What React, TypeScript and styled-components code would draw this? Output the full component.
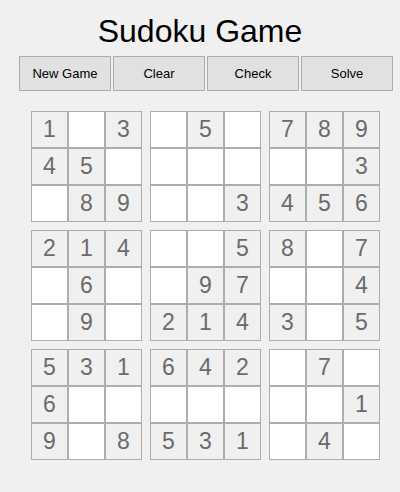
import styled, { createGlobalStyle } from "styled-components";

const GlobalStyle = createGlobalStyle`
  html, body {
    margin: 0;
    padding: 0;
    background: #f0f0f0;
  }
  * {
    box-sizing: border-box;
  }
`;

const Page = styled.div`
  width: 400px;
  min-height: 492px;
  background: #f0f0f0;
  font-family: "Liberation Sans", Arial, sans-serif;
  padding-top: 13px;
`;

const Title = styled.h1`
  margin: 0;
  font-size: 32px;
  font-weight: normal;
  line-height: 37px;
  text-align: center;
  color: #000;
`;

const Toolbar = styled.div`
  display: flex;
  gap: 2px;
  margin: 6px 0 0 19px;
`;

const Button = styled.button`
  width: 92px;
  height: 35px;
  padding: 0;
  background: #e1e1e1;
  border: 1px solid #adadad;
  border-radius: 0;
  font-family: "Liberation Sans", Arial, sans-serif;
  font-size: 13px;
  color: #000;
`;

const Board = styled.div`
  display: grid;
  grid-template-columns: repeat(3, 111px);
  grid-auto-rows: 111px;
  gap: 8px;
  margin: 20px 0 0 31px;
`;

const Box = styled.div`
  display: grid;
  grid-template-columns: repeat(3, 37px);
  grid-auto-rows: 37px;
`;

const Cell = styled.div<{ $given: boolean }>`
  display: flex;
  align-items: center;
  justify-content: center;
  border: 1px solid #adadad;
  background: ${(p) => (p.$given ? "#f0f0f0" : "#ffffff")};
  color: #6b6b6b;
  font-size: 23px;
`;

// 0 = empty
const puzzle = [
  [1, 0, 3, 0, 5, 0, 7, 8, 9],
  [4, 5, 0, 0, 0, 0, 0, 0, 3],
  [0, 8, 9, 0, 0, 3, 4, 5, 6],
  [2, 1, 4, 0, 0, 5, 8, 0, 7],
  [0, 6, 0, 0, 9, 7, 0, 0, 4],
  [0, 9, 0, 2, 1, 4, 3, 0, 5],
  [5, 3, 1, 6, 4, 2, 0, 7, 0],
  [6, 0, 0, 0, 0, 0, 0, 0, 1],
  [9, 0, 8, 5, 3, 1, 0, 4, 0],
];

function boxCells(b: number) {
  const br = Math.floor(b / 3) * 3;
  const bc = (b % 3) * 3;
  const out: number[] = [];
  for (let r = 0; r < 3; r++) {
    for (let c = 0; c < 3; c++) {
      out.push(puzzle[br + r][bc + c]);
    }
  }
  return out;
}

export default function App() {
  return (
    <Page>
      <GlobalStyle />
      <Title>Sudoku Game</Title>
      <Toolbar>
        <Button>New Game</Button>
        <Button>Clear</Button>
        <Button>Check</Button>
        <Button>Solve</Button>
      </Toolbar>
      <Board>
        {Array.from({ length: 9 }, (_, b) => (
          <Box key={b}>
            {boxCells(b).map((v, i) => (
              <Cell key={i} $given={v !== 0}>
                {v !== 0 ? v : ""}
              </Cell>
            ))}
          </Box>
        ))}
      </Board>
    </Page>
  );
}
